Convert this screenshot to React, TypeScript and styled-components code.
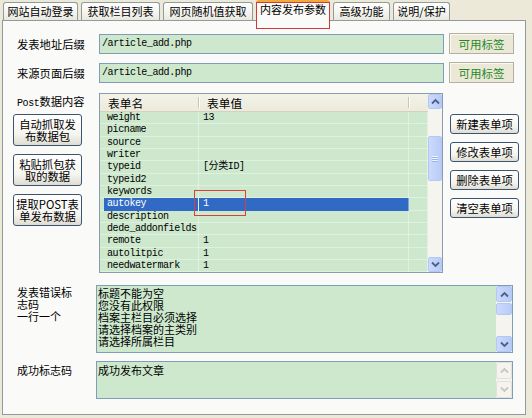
import React from 'react';
import styled, { createGlobalStyle, css } from 'styled-components';

const cjk = `"Noto Sans CJK SC", "Noto Sans", sans-serif`;
const mono = `"Liberation Mono", "Noto Sans CJK SC", monospace`;

const GlobalStyle = createGlobalStyle`
  html, body {
    margin: 0;
    padding: 0;
    background: #ece9d8;
  }
  body {
    font-family: ${cjk};
    color: #000;
  }
  * {
    box-sizing: border-box;
  }
`;

const Window = styled.div`
  width: 532px;
  height: 418px;
  padding-left: 2px;
  background: #ece9d8;
  overflow: hidden;
`;

const TabStrip = styled.div`
  position: relative;
  z-index: 1;
  display: flex;
  align-items: flex-end;
  gap: 3px;
  height: 20px;
  padding-left: 1px;
`;

const Tab = styled.div<{ $w: number; $active?: boolean }>`
  position: relative;
  width: ${p => p.$w}px;
  height: 18px;
  border: 1px solid #919b9c;
  border-bottom: none;
  border-radius: 3px 3px 0 0;
  background: linear-gradient(#ffffff, #f4f3ee 60%, #e8e7e0);
  font: 11px/17px ${cjk};
  text-align: center;
  white-space: nowrap;

  ${p =>
    p.$active &&
    css`
      height: 21px;
      margin-bottom: -1px;
      border-top: 3px solid #f2a93b;
      background: #fafaf8;
      line-height: 13px;

      &::after {
        content: '';
        position: absolute;
        left: -1px;
        right: -1px;
        top: -1px;
        height: 25px;
        border: 1.5px solid #cf3a36;
      }
    `}
`;

const Panel = styled.div`
  display: flex;
  flex-direction: column;
  width: 524px;
  height: 395px;
  padding: 12px 0 0 10px;
  border: 1px solid #919b9c;
  background: #fafaf8;
`;

const FieldRow = styled.div`
  display: flex;
  align-items: center;
  height: 21px;

  & + & {
    margin-top: 8px;
  }
`;

const FieldLabel = styled.div<{ $w: number }>`
  width: ${p => p.$w}px;
  padding-left: 4px;
  font: 11.3px/14px ${cjk};
  white-space: nowrap;
`;

const PathInput = styled.div`
  width: 345px;
  height: 20px;
  padding-left: 2px;
  border: 1px solid #7f9db9;
  background: #cde8cd;
  font: 10px/18px ${mono};
  letter-spacing: -0.4px;
`;

const TagButton = styled.button`
  width: 65px;
  height: 21px;
  margin-left: 5px;
  padding: 0;
  border: 1px solid #b3b09e;
  box-shadow: inset 1px 1px 0 #fbfaf4;
  background: #ebe8d8;
  color: #1f8a1f;
  font: 11.5px/18px ${cjk};
`;

const DataSection = styled.div`
  display: flex;
  height: 180px;
  margin-top: 10px;
`;

const SideColumn = styled.div<{ $top: number }>`
  display: flex;
  flex-direction: column;
  gap: 8px;
  width: 69px;
  padding-top: ${p => p.$top}px;
`;

const SideLabel = styled.div`
  height: 13px;
  padding-left: 4px;
  font: 11.3px/17px ${cjk};
  white-space: nowrap;
`;

const PostWord = styled.span`
  font: 10px ${mono};
  letter-spacing: -0.4px;
`;

const XPButton = styled.button<{ $h: number }>`
  width: 69px;
  height: ${p => p.$h}px;
  padding: 0;
  border: 1px solid #3a5571;
  border-radius: 3px;
  background: linear-gradient(#ffffff, #f5f4ef 65%, #dedcd2);
  color: #000;
  font: 11.3px/12.5px ${cjk};
  text-align: center;
`;

const TableBox = styled.div`
  position: relative;
  display: flex;
  width: 344px;
  height: 180px;
  margin: 0 7px 0 17px;
  border: 1px solid #8a9cae;
  background: #cde8cd;
`;

const ListArea = styled.div`
  flex: 1;
  overflow: hidden;
`;

const HeaderRow = styled.div`
  display: flex;
  height: 18px;
  border-bottom: 1px solid #d4d1bf;
  background: linear-gradient(#f4f3ea, #ebeadb);
`;

const HeaderCell = styled.div<{ $w: number }>`
  position: relative;
  width: ${p => p.$w}px;
  padding-left: 8px;
  font: 11.7px/17px ${cjk};
  white-space: nowrap;

  &:not(:last-child)::after {
    content: '';
    position: absolute;
    right: 0;
    top: 3px;
    bottom: 3px;
    width: 1px;
    background: #c9c6b4;
    box-shadow: 1px 0 0 #fff;
  }
`;

const Row = styled.div<{ $selected?: boolean }>`
  display: flex;
  height: 12.33px;
  box-shadow: inset 0 -1px 0 rgba(255, 255, 255, 0.35);
  color: ${p => (p.$selected ? '#fff' : '#000')};
  font: 10px/12.33px ${mono};
  letter-spacing: -0.4px;
  white-space: nowrap;
`;

const Cell = styled.div<{ $w: number; $pad: number; $fill?: string }>`
  width: ${p => p.$w}px;
  padding-left: ${p => p.$pad}px;
  border-right: 1px solid rgba(255, 255, 255, 0.4);
  background: ${p => p.$fill || 'transparent'};
`;

const MarkBox = styled.div`
  position: absolute;
  left: 94px;
  top: 96px;
  width: 52px;
  height: 26px;
  border: 1.5px solid #d8403c;
`;

const ScrollBar = styled.div<{ $w: number }>`
  display: flex;
  flex-direction: column;
  width: ${p => p.$w}px;
  background: #f5f4ef;
`;

const ScrollButton = styled.div<{ $h: number; $off?: boolean }>`
  display: flex;
  align-items: center;
  justify-content: center;
  height: ${p => p.$h}px;
  border: 1px solid ${p => (p.$off ? '#e3e2da' : '#b4c8f5')};
  border-radius: 2px;
  background: ${p => (p.$off ? '#f4f3ee' : 'linear-gradient(90deg, #cbdafc, #b7cbf7)')};

  &:last-child {
    margin-top: auto;
  }
`;

const Thumb = styled.div<{ $top: number; $h: number }>`
  display: flex;
  flex-direction: column;
  align-items: center;
  justify-content: center;
  gap: 1px;
  height: ${p => p.$h}px;
  margin-top: ${p => p.$top}px;
  border: 1px solid #b4c8f5;
  border-radius: 2px;
  background: linear-gradient(90deg, #cbdafc, #b9ccf7);

  span {
    width: 6px;
    height: 1px;
    background: #eef3ff;
    box-shadow: 0 1px 0 #9cb3e8;
  }
`;

const NoteRow = styled.div<{ $gap: number; $h: number }>`
  display: flex;
  height: ${p => p.$h}px;
  margin-top: ${p => p.$gap}px;
`;

const NoteLabel = styled.div<{ $top: number }>`
  width: 83px;
  padding: ${p => p.$top}px 0 0 4px;
  font: 11px/12px ${cjk};
`;

const NoteLabelText = styled.div`
  width: 60px;
`;

const NoteBox = styled.div`
  display: flex;
  width: 417px;
  border: 1px solid #7f9db9;
  background: #cde8cd;
`;

const NoteText = styled.div<{ $top: number }>`
  flex: 1;
  padding: ${p => p.$top}px 0 0 1px;
  font: 11px/12px ${cjk};
`;

const Chevron = ({ up, off }: { up?: boolean; off?: boolean }) => (
  <svg width="9" height="7" viewBox="0 0 9 7">
    <polyline
      points={up ? '1,5.5 4.5,2 8,5.5' : '1,1.5 4.5,5 8,1.5'}
      fill="none"
      stroke={off ? '#c9c8bf' : '#4d6185'}
      strokeWidth="1.8"
    />
  </svg>
);

const tabs = [
  { name: '网站自动登录', w: 75 },
  { name: '获取栏目列表', w: 79 },
  { name: '网页随机值获取', w: 90 },
  { name: '内容发布参数', w: 74, active: true },
  { name: '高级功能', w: 57 },
  { name: '说明/保护', w: 57 },
];

const fields = [
  { name: 'weight', value: '13' },
  { name: 'picname', value: '' },
  { name: 'source', value: '' },
  { name: 'writer', value: '' },
  { name: 'typeid', value: '[分类ID]' },
  { name: 'typeid2', value: '' },
  { name: 'keywords', value: '' },
  { name: 'autokey', value: '1', selected: true },
  { name: 'description', value: '' },
  { name: 'dede_addonfields', value: '' },
  { name: 'remote', value: '1' },
  { name: 'autolitpic', value: '1' },
  { name: 'needwatermark', value: '1' },
];

const errorCodes = ['标题不能为空', '您没有此权限', '档案主栏目必须选择', '请选择档案的主类别', '请选择所属栏目'];

const selectedFill = 'linear-gradient(90deg, transparent 4px, #316ac5 4px)';

const App: React.FC = () => {
  return (
    <>
      <GlobalStyle />
      <Window>
        <TabStrip>
          {tabs.map(tab => (
            <Tab key={tab.name} $w={tab.w} $active={tab.active}>
              {tab.name}
            </Tab>
          ))}
        </TabStrip>
        <Panel>
          <FieldRow>
            <FieldLabel $w={86}>发表地址后缀</FieldLabel>
            <PathInput>/article_add.php</PathInput>
            <TagButton>可用标签</TagButton>
          </FieldRow>
          <FieldRow>
            <FieldLabel $w={86}>来源页面后缀</FieldLabel>
            <PathInput>/article_add.php</PathInput>
            <TagButton>可用标签</TagButton>
          </FieldRow>

          <DataSection>
            <SideColumn $top={0}>
              <SideLabel>
                <PostWord>Post</PostWord>数据内容
              </SideLabel>
              <XPButton $h={32}>
                自动抓取发
                <br />
                布数据包
              </XPButton>
              <XPButton $h={32}>
                粘贴抓包获
                <br />
                取的数据
              </XPButton>
              <XPButton $h={32}>
                提取POST表
                <br />
                单发布数据
              </XPButton>
            </SideColumn>

            <TableBox>
              <ListArea>
                <HeaderRow>
                  <HeaderCell $w={99}>表单名</HeaderCell>
                  <HeaderCell $w={210}>表单值</HeaderCell>
                  <HeaderCell $w={19} />
                </HeaderRow>
                {fields.map(f => (
                  <Row key={f.name} $selected={f.selected}>
                    <Cell $w={99} $pad={7} $fill={f.selected ? selectedFill : undefined}>
                      {f.name}
                    </Cell>
                    <Cell $w={210} $pad={4} $fill={f.selected ? '#316ac5' : undefined}>
                      {f.value}
                    </Cell>
                    <Cell $w={19} $pad={0} />
                  </Row>
                ))}
              </ListArea>
              <ScrollBar $w={14}>
                <ScrollButton $h={15}>
                  <Chevron up />
                </ScrollButton>
                <Thumb $top={27} $h={45}>
                  <span />
                  <span />
                  <span />
                </Thumb>
                <ScrollButton $h={15}>
                  <Chevron />
                </ScrollButton>
              </ScrollBar>
              <MarkBox />
            </TableBox>

            <SideColumn $top={21}>
              <XPButton $h={20}>新建表单项</XPButton>
              <XPButton $h={20}>修改表单项</XPButton>
              <XPButton $h={20}>删除表单项</XPButton>
              <XPButton $h={20}>清空表单项</XPButton>
            </SideColumn>
          </DataSection>

          <NoteRow $gap={12} $h={68}>
            <NoteLabel $top={1}>
              <NoteLabelText>
                发表错误标志码
                <br />
                一行一个
              </NoteLabelText>
            </NoteLabel>
            <NoteBox>
              <NoteText $top={1}>
                {errorCodes.map(line => (
                  <div key={line}>{line}</div>
                ))}
              </NoteText>
              <ScrollBar $w={16}>
                <ScrollButton $h={16}>
                  <Chevron up />
                </ScrollButton>
                <Thumb $top={1} $h={12} />
                <ScrollButton $h={16}>
                  <Chevron />
                </ScrollButton>
              </ScrollBar>
            </NoteBox>
          </NoteRow>

          <NoteRow $gap={8} $h={38}>
            <NoteLabel $top={3}>成功标志码</NoteLabel>
            <NoteBox>
              <NoteText $top={2}>成功发布文章</NoteText>
              <ScrollBar $w={16}>
                <ScrollButton $h={17} $off>
                  <Chevron up off />
                </ScrollButton>
                <ScrollButton $h={17} $off>
                  <Chevron off />
                </ScrollButton>
              </ScrollBar>
            </NoteBox>
          </NoteRow>
        </Panel>
      </Window>
    </>
  );
};

export default App;
